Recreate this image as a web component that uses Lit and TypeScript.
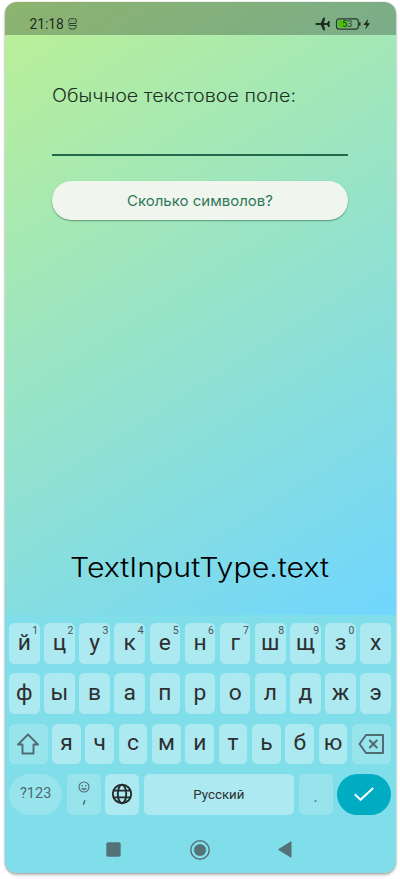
import { LitElement, html, css, svg } from "lit";
import { customElement, property } from "lit/decorators.js";

@customElement("fit-text")
class FitText extends LitElement {
  @property() text = "";
  @property({ type: Number }) size = 16;
  @property({ type: Number }) length = 100;
  @property({ type: Number }) weight = 400;

  static styles = css`
    :host { display: block; line-height: 0; }
    svg { display: block; overflow: visible; }
    text { font-family: Inter, "Noto Sans", sans-serif; fill: currentColor; }
  `;

  render() {
    return html`<svg width=${this.length} height=${this.size}>
      ${svg`<text x="0" y=${this.size * 0.8} font-size=${this.size} font-weight=${this.weight}
        textLength=${this.length} lengthAdjust="spacingAndGlyphs">${this.text}</text>`}
    </svg>`;
  }
}

@customElement("status-bar")
class StatusBar extends LitElement {
  static styles = css`
    :host {
      display: flex; align-items: center; box-sizing: border-box; height: 33px;
      padding: 10px 23.5px 0 25px; background: rgba(0, 0, 0, 0.25); color: #1f2b20;
      font-family: Roboto, sans-serif;
    }
    .time { font-size: 13.8px; font-weight: 450; line-height: 16px; width: 38.5px; }
    .spacer { flex: 1; }
    svg { display: block; }
    text { font: 400 9px Roboto, sans-serif; }
  `;

  render() {
    return html`
      <span class="time">21:18</span>
      <svg width="9" height="12" viewBox="0 0 9 12" fill="none" stroke="#2d3f2b" stroke-width="1">
        <path d="M.7 4.500V2.500Q.7.700 2.500.700H6.500Q8.300.700 8.300 2.500V4.500Q8.300 5.500 7 5.500H2Q.7 5.500.7 6.500Q.7 7.500 2 7.500H8.300V8.500Q8.300 11.200 4.500 11.200Q.9 11.200.7 9.200" />
        <path d="M3 3.500V2.700M6 3.500V2.700" stroke-width=".8" />
      </svg>
      <span class="spacer"></span>
      <svg width="57" height="14" viewBox="0 0 57 14">
        <path fill="#1f2b20" d="M.3 7Q.3 5.900 1.800 5.900H5.800L8.200.8H10.200L9 5.900H12.200L13.400 4H15L14.500 7L15 10H13.400L12.200 8.100H9L10.200 13.200H8.200L5.800 8.100H1.800Q.3 8.100.3 7Z" />
        <rect x="21.500" y="1.900" width="21.800" height="10.200" rx="2.600" fill="none" stroke="#2a3b2d" stroke-width="1.200" />
        <path fill="#47c20b" d="M24.500 3.500H32.500V10.500H24.500Q23 10.500 23 9V5Q23 3.500 24.500 3.500Z" />
        <rect x="44" y="5" width="1.600" height="4" rx=".7" fill="#2a3b2d" />
        <text x="27.300" y="10.200" fill="#1f3c1c">53</text>
        <path fill="#1f2b20" d="M53.200 1.800L48.400 8H51.400L50.200 12.400L55.200 6.200H52.200Z" />
      </svg>
    `;
  }
}

@customElement("soft-keyboard")
class SoftKeyboard extends LitElement {
  static styles = css`
    :host {
      display: flex; flex-direction: column; gap: 9.800px; box-sizing: border-box; height: 257.500px;
      padding: 8px 4.500px 0; background: #80deea; color: #2d2f30;
      font-family: Roboto, "Noto Sans", sans-serif;
    }
    .row { display: flex; gap: 4.500px; height: 40.500px; }
    .key {
      position: relative; flex: 1; display: flex; align-items: center; justify-content: center;
      background: #ade9f0; border-radius: 5.500px; font-size: 22.800px; line-height: 26px;
      padding-bottom: 1px; box-sizing: border-box;
    }
    .num { position: absolute; top: 2px; right: 1.500px; font-size: 10.500px; line-height: 12px; color: #3e5457; }
    .soft { background: #98e4ed; color: #4c696d; }
    .shift { flex: 0 0 38.500px; padding: 0; }
    .back { flex: 0 0 39px; padding: 0; }
    .mode { flex: 0 0 53.300px; border-radius: 21px; font-size: 14.500px; padding: 0; }
    .w34 { flex: 0 0 34px; padding: 0; }
    .emoji { flex-direction: column; }
    .space { font-size: 13.300px; padding: 1px 0 0; }
    .dot { font-size: 16px; padding-top: 5px; }
    .enter { flex: 0 0 54px; border-radius: 21px; background: #00acc1; padding: 0; }
    .nav {
      display: grid; grid-template-columns: 15px 20px 14px; column-gap: 68.500px; align-items: center;
      height: 22px; padding-left: 97px; margin-top: 14px;
    }
    .last { height: 41.200px; }
    svg { display: block; }
  `;

  render() {
    const nums = "1234567890";
    return html`
      <div class="row">
        ${[..."йцукенгшщзх".normalize("NFC")].map(
          (c, i) => html`<div class="key">${c}${nums[i] ? html`<span class="num">${nums[i]}</span>` : ""}</div>`
        )}
      </div>
      <div class="row">${[..."фывапролджэ"].map((c) => html`<div class="key">${c}</div>`)}</div>
      <div class="row">
        <div class="key soft shift">
          <svg width="24" height="22" viewBox="0 0 24 22" fill="none" stroke="#4f6c70" stroke-width="1.900" stroke-linejoin="round">
            <path d="M12 1.500L22 11.500H17.500V20.500H6.500V11.500H2Z" />
          </svg>
        </div>
        ${[..."ячсмитьбю"].map((c) => html`<div class="key">${c}</div>`)}
        <div class="key soft back">
          <svg width="27" height="20" viewBox="0 0 27 20" fill="none" stroke="#4f6c70" stroke-width="2" stroke-linejoin="round">
            <path d="M8 1H25V19H8L1.500 10Z" /><path d="M11.300 6L19.300 14M19.300 6L11.300 14" />
          </svg>
        </div>
      </div>
      <div class="row last">
        <div class="key soft mode">?123</div>
        <div class="key soft w34 emoji">
          <svg width="12" height="33" viewBox="0 0 12 33" fill="none" stroke="#4f6c70" stroke-width="1.100">
            <circle cx="6" cy="9" r="5" />
            <path d="M3.300 10.600Q6 13.500 8.700 10.600Z" fill="#4f6c70" stroke-width=".5" />
            <path d="M4.200 6.900V8.400M7.800 6.900V8.400" stroke-width="1.200" />
            <path d="M6.900 22.200L5.300 26.800" stroke-width="1.500" />
          </svg>
        </div>
        <div class="key w34">
          <svg width="22" height="22" viewBox="0 0 22 22" fill="none" stroke="#252c2d" stroke-width="1.900">
            <circle cx="11" cy="11" r="9.200" /><ellipse cx="11" cy="11" rx="4.200" ry="9.200" />
            <path d="M2.800 7.600H19.200M2.800 14.400H19.200" />
          </svg>
        </div>
        <div class="key space">Русский</div>
        <div class="key soft w34 dot">.</div>
        <div class="key enter">
          <svg width="20" height="14" viewBox="0 0 20 14" fill="none" stroke="#fff" stroke-width="2">
            <path d="M.8 7.300L6.500 12.800L19.200 1" />
          </svg>
        </div>
      </div>
      <div class="nav">
        <svg width="15" height="15"><rect x=".3" y=".3" width="14.400" height="14.400" rx="2" fill="#527277" /></svg>
        <svg width="20" height="20"><circle cx="10" cy="10" r="9.200" fill="none" stroke="#527277" stroke-width="1.400" /><circle cx="10" cy="10" r="6" fill="#527277" /></svg>
        <svg width="14" height="17"><path d="M13 .8V16.200L.5 8.500Z" fill="#527277" stroke="#527277" stroke-linejoin="round" /></svg>
      </div>
    `;
  }
}

@customElement("app-root")
class AppRoot extends LitElement {
  static styles = css`
    :host { display: block; box-sizing: border-box; width: 400px; height: 879px; padding: 2px 4.500px 0; background: #fff; }
    .phone {
      display: flex; flex-direction: column; height: 870.500px; border-radius: 12px; overflow: hidden;
      box-shadow: 0 0 1px rgba(0, 0, 0, 0.6), 0 2px 3px rgba(0, 0, 0, 0.3);
    }
    .screen { display: flex; flex-direction: column; height: 613px; background: linear-gradient(147.500deg, #bcf094, #70d6ff); }
    .content { display: flex; flex-direction: column; flex: 1; padding: 0 47.500px; }
    .label { margin-top: 53px; color: #1c3024; }
    .line { height: 2px; margin-top: 48px; background: #20694a; }
    .btn {
      display: flex; justify-content: center; align-items: center; height: 39.500px; margin-top: 24.600px;
      padding-top: 1px; box-sizing: border-box;
      border-radius: 20px; background: #f0f5ee; color: #2f7859;
      box-shadow: 0 1px 1.500px rgba(0, 60, 40, 0.45);
    }
    .title { display: flex; justify-content: center; margin: auto 2px 32.500px 0; color: #000; }
  `;

  render() {
    return html`
      <div class="phone">
        <div class="screen">
          <status-bar></status-bar>
          <div class="content">
            <fit-text class="label" text="Обычное текстовое поле:" size="18" length="244" weight="300"></fit-text>
            <div class="line"></div>
            <div class="btn"><fit-text text="Сколько символов?" size="14.5" length="146" weight="380"></fit-text></div>
            <div class="title"><fit-text text="TextInputType.text" size="27.5" length="259" weight="300"></fit-text></div>
          </div>
        </div>
        <soft-keyboard></soft-keyboard>
      </div>
    `;
  }
}
